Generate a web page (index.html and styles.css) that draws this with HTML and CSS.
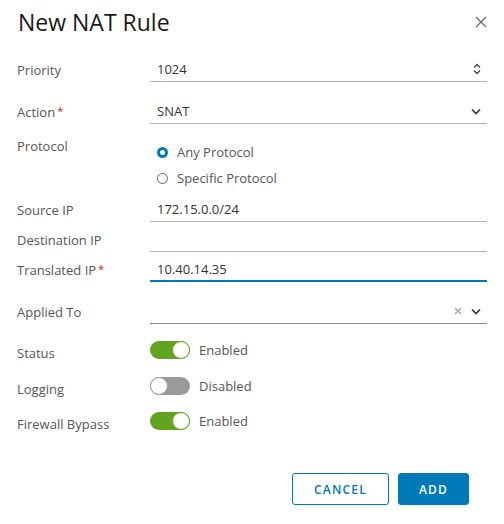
FILE: index.html
```html
<!DOCTYPE html>
<html>
<head>
<meta charset="utf-8">
<link rel="stylesheet" href="styles.css">
</head>
<body>
<div class="dialog">
  <div class="header">
    <h1 class="title">New NAT Rule</h1>
    <svg class="close" width="12" height="12" viewBox="0 0 12 12"><path d="M1 1L11 11M11 1L1 11" stroke="#666" stroke-width="1.2" fill="none"/></svg>
  </div>

  <div class="row r-priority">
    <div class="label">Priority</div>
    <div class="input">
      <span class="value">1024</span>
      <svg class="icon" width="8" height="12" viewBox="0 0 8 12"><path d="M1 4.5L4 1.5L7 4.5M1 7.5L4 10.5L7 7.5" stroke="#444" stroke-width="1.3" fill="none"/></svg>
    </div>
  </div>

  <div class="row r-action">
    <div class="label">Action<span class="req">*</span></div>
    <div class="input">
      <span class="value">SNAT</span>
      <svg class="icon" width="10" height="7" viewBox="0 0 10 7"><path d="M1 1.5L5 5.5L9 1.5" stroke="#333" stroke-width="1.6" fill="none"/></svg>
    </div>
  </div>

  <div class="row r-protocol">
    <div class="label">Protocol</div>
    <div class="radios">
      <div class="radio"><span class="dot checked"></span>Any Protocol</div>
      <div class="radio"><span class="dot"></span>Specific Protocol</div>
    </div>
  </div>

  <div class="row r-source">
    <div class="label">Source IP</div>
    <div class="input"><span class="value">172.15.0.0/24</span></div>
  </div>

  <div class="row r-dest">
    <div class="label">Destination IP</div>
    <div class="input"><span class="value"></span></div>
  </div>

  <div class="row r-trans">
    <div class="label">Translated IP<span class="req">*</span></div>
    <div class="input focus"><span class="value">10.40.14.35</span></div>
  </div>

  <div class="row r-applied">
    <div class="label">Applied To</div>
    <div class="input dark">
      <span class="value"></span>
      <svg class="clear" width="8" height="8" viewBox="0 0 8 8"><path d="M1 1L7 7M7 1L1 7" stroke="#aaa" stroke-width="1.5" fill="none"/></svg>
      <svg class="icon" width="10" height="7" viewBox="0 0 10 7"><path d="M1 1.5L5 5.5L9 1.5" stroke="#1d2f4f" stroke-width="1.6" fill="none"/></svg>
    </div>
  </div>

  <div class="row r-toggle r-status">
    <div class="label">Status</div>
    <div class="toggle-wrap"><span class="toggle on"></span>Enabled</div>
  </div>

  <div class="row r-toggle r-logging">
    <div class="label">Logging</div>
    <div class="toggle-wrap"><span class="toggle"></span>Disabled</div>
  </div>

  <div class="row r-toggle r-fw">
    <div class="label">Firewall Bypass</div>
    <div class="toggle-wrap"><span class="toggle on"></span>Enabled</div>
  </div>

  <div class="footer">
    <button class="btn outline">CANCEL</button>
    <button class="btn primary">ADD</button>
  </div>
</div>
</body>
</html>
```
FILE: styles.css
```css
* { box-sizing: border-box; }
body {
  margin: 0;
  background: #fff;
  font-family: "Open Sans", "Noto Sans", sans-serif;
  color: #565656;
}
.dialog {
  width: 504px;
  height: 524px;
  padding: 5px 17px 0 17px;
}
.header {
  display: flex;
  justify-content: space-between;
  align-items: center;
  height: 35px;
}
.title {
  margin: 0 0 0 1px;
  font-size: 23px;
  font-weight: 400;
  color: #1a1a1a;
  line-height: 35px;
}
.close { margin-top: -1px; }
.row {
  display: grid;
  grid-template-columns: 133px 337px;
  align-items: center;
}
.label {
  font-size: 13px;
  line-height: 16px;
  color: #565656;
}
.req {
  color: #c92100;
  margin-left: 2px;
  font-size: 11px;
  vertical-align: 2px;
}
.input {
  height: 25px;
  border-bottom: 1px solid #b3b3b3;
  display: flex;
  align-items: center;
  padding: 0 6px 0 7px;
  font-size: 13px;
  color: #333;
}
.input .value { flex: 1; }
.input.focus { border-bottom: 2px solid #0079b8; }
.input.dark { border-bottom-color: #8c8c8c; }
.clear { margin-right: 9px; }
.r-priority { margin-top: 17px; }
.r-action { margin-top: 17px; }
.r-protocol { margin-top: 14px; align-items: start; }
.radios { padding: 1px 0 0 7px; }
.radio {
  height: 26px;
  display: flex;
  align-items: center;
  font-size: 13px;
  color: #565656;
}
.dot {
  width: 11px;
  height: 11px;
  border-radius: 50%;
  border: 1px solid #666;
  margin-right: 9px;
}
.dot.checked {
  border: 3.5px solid #0079b8;
  background: #fff;
}
.r-source { margin-top: 6px; }
.r-dest { margin-top: 5px; }
.r-trans { margin-top: 5px; }
.r-applied { margin-top: 17px; }
.r-status { margin-top: 17px; }
.r-logging { margin-top: 18px; }
.r-fw { margin-top: 17px; }
.r-toggle .label { padding-top: 3px; margin-bottom: -3px; }
.toggle-wrap {
  display: flex;
  align-items: center;
  height: 18px;
  font-size: 13px;
  color: #565656;
}
.toggle {
  position: relative;
  width: 40px;
  height: 18px;
  border-radius: 9px;
  background: #9a9a9a;
  margin-right: 9px;
}
.toggle::after {
  content: "";
  position: absolute;
  top: 0;
  left: 0;
  width: 18px;
  height: 18px;
  border-radius: 50%;
  background: #fff;
  border: 1px solid #9a9a9a;
  box-sizing: border-box;
}
.toggle.on { background: #62a420; }
.toggle.on::after { left: 22px; border-color: #62a420; }
.footer {
  display: flex;
  justify-content: flex-end;
  gap: 9px;
  margin-top: 43px;
  padding-right: 18px;
}
.btn {
  height: 32px;
  border-radius: 3px;
  font-family: inherit;
  font-size: 12px;
  font-weight: 600;
  letter-spacing: 1.2px;
  padding: 0;
}
.btn.outline {
  width: 97px;
  background: #fff;
  border: 1px solid #0079b8;
  color: #0079b8;
}
.btn.primary {
  width: 71px;
  background: #0079b8;
  border: 1px solid #0079b8;
  color: #fff;
}
```
